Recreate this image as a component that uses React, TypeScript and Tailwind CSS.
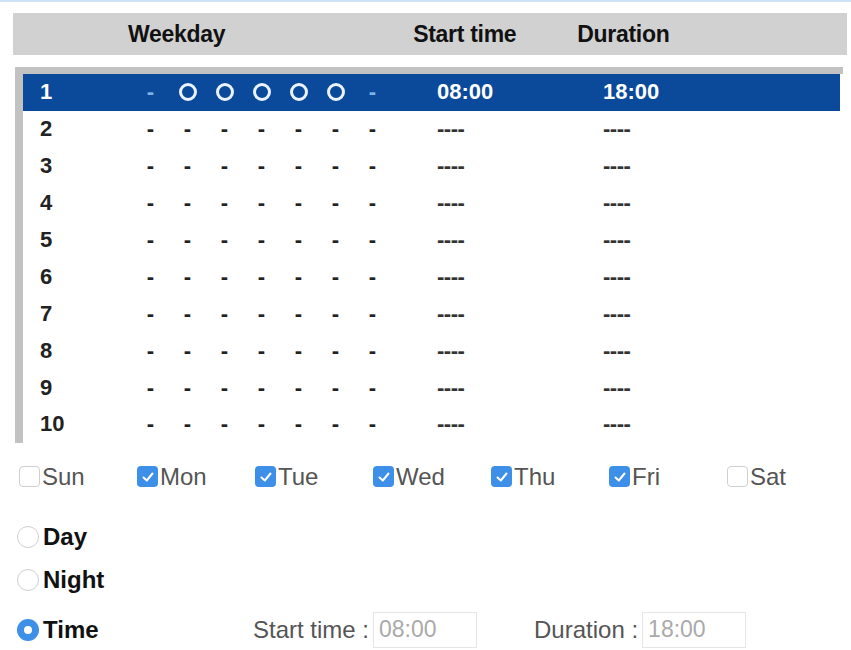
import React from "react";

const days = ["Sun", "Mon", "Tue", "Wed", "Thu", "Fri", "Sat"];
const checked = [false, true, true, true, true, true, false];

function Check({ on }: { on: boolean }) {
  if (on) {
    return (
      <span className="w-[21px] h-[21px] rounded-[4px] bg-[#3d8fe8] flex items-center justify-center shrink-0">
        <svg width="14" height="14" viewBox="0 0 14 14">
          <path d="M2.5 7.5 L5.8 10.5 L11.5 3.5" stroke="white" strokeWidth="2" fill="none" strokeLinecap="round" strokeLinejoin="round" />
        </svg>
      </span>
    );
  }
  return <span className="w-[21px] h-[21px] rounded-[4px] border border-[#cfcfcf] bg-white shrink-0" />;
}

function Radio({ on }: { on: boolean }) {
  if (on) {
    return (
      <span className="w-[22px] h-[22px] rounded-full bg-[#3d8fe8] flex items-center justify-center shrink-0">
        <span className="w-[8px] h-[8px] rounded-full bg-white" />
      </span>
    );
  }
  return <span className="w-[22px] h-[22px] rounded-full border border-[#d0d0d0] bg-white shrink-0" />;
}

export default function App() {
  const rows = Array.from({ length: 10 }, (_, i) => i + 1);
  return (
    <div className="w-[851px] h-[650px] bg-white overflow-hidden relative leading-none" style={{ fontFamily: '"Liberation Sans", Arial, sans-serif' }}>
      <div className="h-[2px] bg-[#cfe2f6]" />
      {/* header */}
      <div className="mt-[11px] ml-[13px] w-[834px] h-[42px] bg-[#d1d1d1] flex items-center text-[23px] font-bold text-[#111] tracking-[-0.3px]">
        <span className="ml-[115px]">Weekday</span>
        <span className="ml-[188px]">Start time</span>
        <span className="ml-[61px]">Duration</span>
      </div>
      {/* list */}
      <div className="mt-[12px] ml-[15px] w-[828px] border-t-[7px] border-l-[8px] border-[#c2c2c2] border-r-0 border-b-0 flex flex-col">
        {rows.map((n) => {
          const sel = n === 1;
          return (
            <div key={n} className={`h-[36.9px] flex items-center text-[22px] font-bold ${sel ? "bg-[#0b4a9b] text-white mr-[3px]" : "text-[#222]"}`}>
              <span className="w-[109px] pl-[17px]">{n}</span>
              {Array.from({ length: 7 }, (_, d) => (
                <span key={d} className="w-[37px] flex justify-center">
                  {sel && d >= 1 && d <= 5 ? (
                    <span className="w-[18px] h-[18px] rounded-full border-[3px] border-[#eaf3ff]" />
                  ) : (
                    <span className={sel ? "text-[#7fb3e6]" : "text-[#222]"}>-</span>
                  )}
                </span>
              ))}
              <span className="w-[212px] pl-[46px] flex items-center">
                {sel ? "08:00" : <span className="text-[#333] tracking-[-0.5px]">----</span>}
              </span>
              <span>
                {sel ? "18:00" : <span className="text-[#333] tracking-[-0.5px]">----</span>}
              </span>
            </div>
          );
        })}
      </div>
      {/* weekdays */}
      <div className="mt-[22px] ml-[19px] h-[24px] flex items-center">
        {days.map((d, i) => (
          <div key={d} className="w-[118px] flex items-center gap-[2px] text-[24px] text-[#555]">
            <Check on={checked[i]} />
            <span>{d}</span>
          </div>
        ))}
      </div>
      {/* radios */}
      <div className="mt-[36px] ml-[17px] h-[24px] flex items-center gap-[4px] text-[24px] font-bold text-[#111]">
        <Radio on={false} />
        <span>Day</span>
      </div>
      <div className="mt-[19px] ml-[17px] h-[24px] flex items-center gap-[4px] text-[24px] font-bold text-[#111]">
        <Radio on={false} />
        <span>Night</span>
      </div>
      <div className="mt-[20px] ml-[17px] h-[36px] flex items-center text-[24px]">
        <div className="flex items-center gap-[4px] font-bold text-[#111] w-[236px]">
          <Radio on={true} />
          <span>Time</span>
        </div>
        <span className="text-[#555]">Start time :</span>
        <div className="ml-[4px] w-[104px] h-[36px] border border-[#e6e6e6] flex items-center pl-[5px] text-[#aaa] text-[23px]">08:00</div>
        <span className="ml-[57px] text-[#555]">Duration :</span>
        <div className="ml-[4px] w-[104px] h-[36px] border border-[#e6e6e6] flex items-center pl-[5px] text-[#aaa] text-[23px]">18:00</div>
      </div>
    </div>
  );
}
